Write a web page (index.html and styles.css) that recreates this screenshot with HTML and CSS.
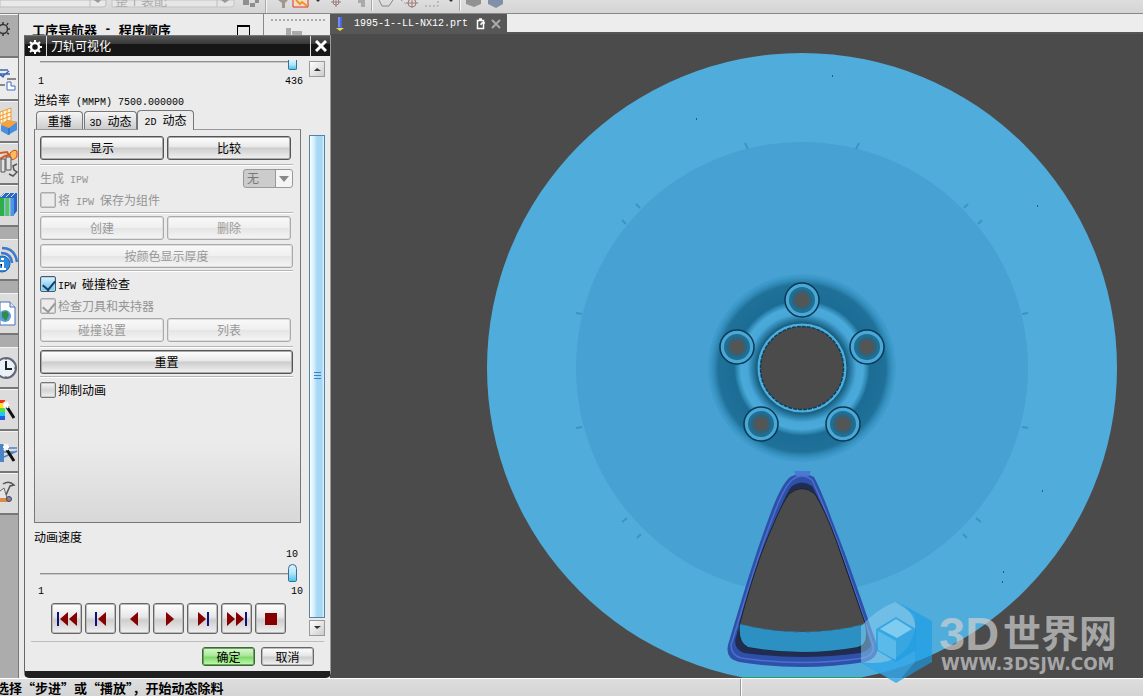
FILE: index.html
```html
<!DOCTYPE html>
<html lang="zh-CN">
<head>
    <meta charset="UTF-8" />
    <meta name="viewport" content="width=device-width, initial-scale=1.0">
    <title>刀轨可视化</title>
    <link rel="stylesheet" href="styles.css">
</head>
<body>

<div class="toolbar">
    <svg class="toolbar-icons" width="560" height="14" viewBox="0 0 560 14">
        <path d="M0 0h106v4q0 3-3 3H0z" fill="#e9e9e9" stroke="#bdbdbd"/>
        <path d="M90 0v7" stroke="#bdbdbd"/>
        <path d="M94 0h7l-3 3z" fill="#999"/>
        <path d="M112 0h122v4q0 3-3 3H112z" fill="#e6e6e6" stroke="#c4c4c4"/>
        <path d="M217 0v7" stroke="#bdbdbd"/>
        <path d="M221 0h8l-4 3z" fill="#999"/>
        <path d="M243 0h6v5h-6zM250 3h5v4h-5zM255 0h4v3h-4z" fill="#8e8e8e"/>
        <path d="M265.500 0v13M371.500 0v11M459.500 0v11" stroke="#aaa"/>
        <path d="M266.500 0v13M372.500 0v11M460.500 0v11" stroke="#f5f5f5"/>
        <path d="M278 0h10l-3 3v5h-3v-5z" fill="#a1978b"/>
        <path d="M293 0v7h15v-7" fill="#f3dcc9" stroke="#d33"/>
        <path d="M296 0l4 4 2-2 5 4" fill="none" stroke="#e89a22" stroke-width="2"/>
        <path d="M316 0h4l-2 2zM449 0h4l-2 2z" fill="#333"/>
        <g fill="none" stroke="#a07878"><circle cx="336" cy="2" r="3"/><path d="M331 2h10M336-3v10"/><circle cx="412" cy="3" r="4"/><path d="M406 3h12M412-3v11"/></g>
        <path d="M358 0h7v7h-4v-4h-3z" fill="#aaa"/>
        <path d="M379 0l3 6h7l4-6" fill="none" stroke="#888"/>
        <path d="M401 0l6 5M425 6h13v-6" fill="none" stroke="#999" stroke-dasharray="2 2"/>
        <path d="M466 0h15v4l-7 3-8-3z" fill="#929292"/>
        <path d="M488 0h15v4l-7 4-8-4z" fill="#8090a8"/>
    </svg>
    <span class="toolbar-combo">整个装配</span>
</div>

<div class="main">
    <div class="resource-bar">
        <button class="res-item res-gear" aria-label="设置">
            <svg width="18" height="24" viewBox="0 0 18 24"><g fill="none" stroke="#333" stroke-width="1.500"><circle cx="3" cy="8" r="4.500"/><path d="M3 1v2M3 13v2M8 8h2M7 4l1-2M7 12l2 1"/></g></svg>
        </button>
        <button class="res-item res-active" aria-label="装配导航器">
            <svg width="18" height="26" viewBox="0 0 18 26"><path d="M0 4h8M0 8h10M2 11L9 5M0 9l4 2" stroke="#3d65b7" stroke-width="1.500"/><path d="M7 13h9M0 19h5" stroke="#222"/><path d="M7 16h4v4h4v4H7z" fill="#fff" stroke="#446bc0"/></svg>
        </button>
        <button class="res-item" aria-label="部件导航器">
            <svg width="18" height="30" viewBox="0 0 18 30"><path d="M0 5l11-4v15H0z" fill="#fff4df" stroke="#ed9b2e"/><path d="M0 9l11-4M0 13l11-4M3 4v11M7 2v11" stroke="#ed9b2e"/><path d="M1 18l6-5 10 2v8l-9 5-7-4z" fill="#4a8fe0"/><path d="M1 18l8 3 8-6-10-2z" fill="#f9a13a"/><path d="M9 21v7" stroke="#245eaf"/></svg>
        </button>
        <button class="res-item" aria-label="加工导航器">
            <svg width="18" height="30" viewBox="0 0 18 30"><path d="M0 4l7-1 2 3-4 1-5 3" fill="none" stroke="#d85c22" stroke-width="2"/><path d="M10 4l4-3 3 1v6l-4 3-3-2z" fill="#ffb95b" stroke="#d24b18"/><path d="M1 10h4v13H1zM6 8h5v13H6z" fill="#e2e2e2" stroke="#555"/><path d="M17 15l-4 2 1 4 3 2-4 4-4-2" fill="none" stroke="#555" stroke-width="1.500"/></svg>
        </button>
        <button class="res-item" aria-label="重用库">
            <svg width="18" height="30" viewBox="0 0 18 30"><path d="M0 6l4-4h13v18l-4 5H0z" fill="#2867c8"/><path d="M0 7h5v18H0z" fill="#2eae4b"/><path d="M6 7h4v18H6z" fill="#53c36c"/><path d="M11 7h3v18h-3z" fill="#5293e8"/><path d="M1 6l4-4M6 6l4-4M11 6l4-4M5 7v18M10 7v18" stroke="#d8efe0"/></svg>
        </button>
        <span class="res-gap"></span>
        <button class="res-item" aria-label="网页浏览器">
            <svg width="18" height="30" viewBox="0 0 18 30"><g fill="none" stroke="#3d79cc" stroke-width="2.500"><path d="M2 3q13 0 15 14M1 8q10 0 11 10"/></g><circle cx="2" cy="19" r="8" fill="#2f8be0" stroke="#1f62ad"/><path d="M1 14h3M0 18h3v6M0 24h6" stroke="#fff" stroke-width="2"/></svg>
        </button>
        <span class="res-gap"></span>
        <button class="res-item" aria-label="历史网页">
            <svg width="18" height="30" viewBox="0 0 18 30"><path d="M0 3h10l5 5v18H0z" fill="#fff" stroke="#4a70b8"/><path d="M10 3v5h5" fill="#dbe8fa" stroke="#4a70b8"/><circle cx="5" cy="17" r="6" fill="#5a9edc"/><path d="M2 13l5-1 2 4-3 6-4-4z" fill="#328c49"/></svg>
        </button>
        <span class="res-gap"></span>
        <button class="res-item" aria-label="历史记录">
            <svg width="18" height="30" viewBox="0 0 18 30"><circle cx="6" cy="15" r="10" fill="#e9f1fa" stroke="#667" stroke-width="2"/><path d="M6 8v8h6" fill="none" stroke="#222" stroke-width="2"/><path d="M6 6v1M14 15h1M6 23v1M12 9l1-1M12 21l1 1" stroke="#456"/></svg>
        </button>
        <button class="res-item" aria-label="系统材料">
            <svg width="18" height="30" viewBox="0 0 18 30"><path d="M0 5h5v4H0z" fill="#f32e22"/><path d="M0 8h5v5H0z" fill="#ffe32b"/><path d="M0 13h5v4H0z" fill="#58dc42"/><path d="M0 17h5v4H0z" fill="#20c6ed"/><path d="M0 21h5v4H0z" fill="#245be5"/><path d="M7 12l7 11" stroke="#111" stroke-width="3"/><path d="M4 7l4 6M8 7l-4 6M3 10h6" stroke="#fff" stroke-width="2"/></svg>
        </button>
        <button class="res-item" aria-label="加工向导">
            <svg width="18" height="30" viewBox="0 0 18 30"><path d="M0 7h4v18H0z" fill="#4c83c4"/><path d="M4 11h13M4 15h11M4 20l13-6" stroke="#4c83c4" stroke-width="1.500"/><path d="M7 13l7 11" stroke="#111" stroke-width="3"/><path d="M4 7l4 6M8 7l-4 6M3 10h6" stroke="#fff" stroke-width="2"/></svg>
        </button>
        <button class="res-item" aria-label="角色">
            <svg width="18" height="30" viewBox="0 0 18 30"><path d="M3 5q6-4 11 1l-4 1-4 9" fill="#ddd" stroke="#555" stroke-width="1.500"/><path d="M0 12l4-3 3 10-4 3-3-1" fill="#e6e6e6" stroke="#666"/><path d="M0 19h7l3 4H0z" fill="#dc8b46"/><circle cx="9" cy="20" r="2.500" fill="#888" stroke="#447"/></svg>
        </button>
    </div>

    <div class="navigator">
        <div class="navigator-title">工序导航器<span class="latin"> - </span>程序顺序<span class="pin"></span></div>
        <div class="navigator-side"><svg width="66" height="22" viewBox="0 0 66 22"><path d="M7 6h54" stroke="#aaa" stroke-width="2" stroke-dasharray="2 2"/><path d="M22 14h5v8h-5zM28 17h10v5H28z" fill="#aaa"/></svg></div>
    </div>

    <div class="viewport">
        <div class="file-tabs">
            <div class="file-tab">
                <svg width="20" height="19" viewBox="0 0 20 19"><path d="M8 2h4v11H8z" fill="#4964e0"/><path d="M9 2v10" stroke="#a6b4ff"/><path d="M6 13h8l-4 3z" fill="#e9df43"/></svg>
                <span class="file-name">1995-1--LL-NX12.prt</span>
                <svg width="12" height="12" viewBox="0 0 12 12"><path d="M2.500 2.500h6v8h-6zM4 1h3" fill="none" stroke="#fff" stroke-width="1.500"/><path d="M6 7q0-3 4-2" fill="none" stroke="#fff" stroke-width="1.500"/></svg>
                <button class="file-close" aria-label="关闭文件"><svg width="10" height="10" viewBox="0 0 10 10"><path d="M1 1l8 8M9 1L1 9" stroke="#aaa" stroke-width="2"/></svg></button>
            </div>
        </div>

        <svg class="model" viewBox="330 34 813 644">
            <defs>
                <clipPath id="canvas"><path d="M330 34h813v644H330z"/></clipPath>
                <radialGradient id="hub" gradientUnits="userSpaceOnUse" cx="802" cy="368" r="94">
                    <stop offset="0.45" stop-color="#3d9bcb"/>
                    <stop offset="0.47" stop-color="#145673"/>
                    <stop offset="0.51" stop-color="#23759d"/>
                    <stop offset="0.58" stop-color="#49a7d8"/>
                    <stop offset="0.65" stop-color="#4aaada"/>
                    <stop offset="0.7" stop-color="#2a82ac"/>
                    <stop offset="0.72" stop-color="#1b6d95"/>
                    <stop offset="0.89" stop-color="#1f7199"/>
                    <stop offset="0.93" stop-color="#2f88b4"/>
                    <stop offset="0.97" stop-color="#3b98c8"/>
                    <stop offset="1" stop-color="#429dce"/>
                </radialGradient>
                <g id="bolt">
                    <circle r="17" fill="#4aa8d7" stroke="#0b3955" stroke-width="1.500"/>
                    <circle r="13" fill="#1f6f94"/>
                    <circle r="10" fill="#30627a"/>
                    <circle r="7" fill="#545656"/>
                </g>
            </defs>
            <g clip-path="url(#canvas)">
                <circle cx="802" cy="368" r="315" fill="#50addb"/>
                <circle cx="802" cy="368" r="226" fill="#47a2d3"/>
                <g stroke="#3c94c2" stroke-width="2">
                    <path d="M745 143l3 6M859 143l-3 6M636 204l4 4M622 220l4 4M968 204l-4 4M982 220l-4 4M576 313l6 1M1028 313l-6 1M576 428l6-1M1028 428l-6-1M622 522l5-4M637 538l4-4M981 522l-5-4M967 538l-4-4"/>
                </g>
                <path d="M832 76h1M696 119h1M1037 206h1M1042 491h1M1003 572h1M1002 582h1" stroke="#17445c" stroke-width="1.500"/>
                <circle cx="802" cy="368" r="94" fill="url(#hub)"/>
                <circle cx="802" cy="368" r="43" fill="#4b4b4b" stroke="#4faedb" stroke-width="3"/>
                <circle cx="802" cy="368" r="41.500" fill="none" stroke="#0e3e5a" stroke-width="1.500" stroke-dasharray="4 1"/>
                <use href="#bolt" x="802" y="300"/>
                <use href="#bolt" x="737" y="347"/>
                <use href="#bolt" x="867" y="347"/>
                <use href="#bolt" x="761" y="424"/>
                <use href="#bolt" x="843" y="424"/>
                <path d="M790 477Q802 470 814 477Q822 492 832 520C849 562 864 608 877 645Q880 658 865 662Q802 672 739 662Q725 659 728 645C739 609 752 562 771 512Q781 485 790 477z" fill="#2e50a8"/>
                <path d="M794 471h17l-2 5h-13z" fill="#4a79d5"/>
                <path d="M792 480Q802 472 812 480Q819 494 829 520C846 562 861 611 873 645Q875 655 863 658Q802 667 741 658Q731 655 731 645C742 611 755 562 774 514Q784 487 792 480z" fill="none" stroke="#4d6fd0" stroke-width="1.500"/>
                <path d="M792 486Q802 479 812 486Q818 496 828 520C845 560 861 611 871 645Q869 651 860 653Q802 661 744 653Q735 650 735 640C745 608 758 560 776 521Q786 492 792 486z" fill="#202d50"/>
                <path d="M789 494Q802 483 815 494Q826 512 836 540L865 623Q871 645 858 647Q802 657 748 647Q737 642 740 623C748 592 761 551 771 530Q782 503 789 494z" fill="#4b4b4b" stroke="#172433"/>
                <path d="M740 624Q802 640 865 624Q869 644 858 647Q802 657 748 647Q738 642 740 624z" fill="#2c90c2"/>
                <path d="M740 624Q802 640 865 624" fill="none" stroke="#236e91" stroke-dasharray="4 7"/>
                <path d="M742 677.500h120" stroke="#1fa34d"/>
            </g>
            <g class="watermark">
                <path d="M861 626Q877 609 895 602L915 615V662L897 683L861 662z" fill="#8fd0f0" opacity="0.500"/>
                <path d="M896 601L932 621V662L896 683L860 662Q905 669 915 630Q917 613 896 601z" fill="#1a9de8" opacity="0.650"/>
                <path d="M896 617L916 629V650L896 662L876 650V629z" fill="#219ce0" opacity="0.700"/>
                <path d="M896 619L912 629L897 638L880 629z" fill="#9fdcf6" opacity="0.700"/>
                <path d="M878 631L896 641V660L878 650z" fill="#69c2ed" opacity="0.700"/>
                <g fill="#d0d0d0" fill-opacity="0.700">
                    <text class="mark-latin" x="939" y="650">3D</text>
                    <text class="mark-cjk" x="1003" y="647">世界网</text>
                    <text class="mark-url" x="941" y="670">WWW.3DSJW.COM</text>
                </g>
            </g>
        </svg>
    </div>

    <div class="dialog">
        <div class="dialog-title">
            <svg width="21" height="20" viewBox="0 0 21 20"><circle cx="10" cy="11" r="4" fill="none" stroke="#fff" stroke-width="2.500"/><path d="M10 4v3M10 15v3M3 11h3M14 11h3M5 6l2 2M13 14l2 2M15 6l-2 2M7 14l-2 2" stroke="#fff" stroke-width="2"/></svg>
            <h2>刀轨可视化</h2>
            <button class="dialog-close" aria-label="关闭"><svg width="12" height="12" viewBox="0 0 12 12"><path d="M1 1l10 10M11 1L1 11" stroke="#fff" stroke-width="3"/></svg></button>
        </div>

        <div class="dialog-body">
            <div class="dialog-content">
                <input class="slider slider-top" type="range" min="1" max="436" value="436" aria-label="运动">
                <div class="range-labels latin"><span>1</span><span>436</span></div>
                <div class="feed-rate">进给率<span class="latin"> (MMPM) 7500.000000</span></div>

                <div class="tabs" role="tablist">
                    <button class="tab" role="tab">重播</button>
                    <button class="tab" role="tab"><span class="latin">3D </span>动态</button>
                    <button class="tab tab-active" role="tab"><span class="latin">2D </span>动态</button>
                </div>

                <div class="tab-panel">
                    <div class="btn-row">
                        <button class="btn">显示</button>
                        <button class="btn">比较</button>
                    </div>
                    <hr>
                    <div class="field disabled">
                        <label for="ipw">生成<span class="latin"> IPW</span></label>
                        <span class="select-box"><select id="ipw" disabled><option>无</option></select></span>
                    </div>
                    <label class="check disabled"><input type="checkbox" disabled><span>将<span class="latin"> IPW </span>保存为组件</span></label>
                    <hr>
                    <div class="btn-row">
                        <button class="btn" disabled>创建</button>
                        <button class="btn" disabled>删除</button>
                    </div>
                    <button class="btn" disabled>按颜色显示厚度</button>
                    <hr>
                    <label class="check"><input type="checkbox" checked><span><span class="latin">IPW </span>碰撞检查</span></label>
                    <label class="check disabled"><input type="checkbox" checked disabled><span>检查刀具和夹持器</span></label>
                    <div class="btn-row">
                        <button class="btn" disabled>碰撞设置</button>
                        <button class="btn" disabled>列表</button>
                    </div>
                    <hr>
                    <button class="btn">重置</button>
                    <hr>
                    <label class="check"><input type="checkbox"><span>抑制动画</span></label>
                </div>

                <label class="speed-label" for="speed">动画速度</label>
                <div class="speed-value latin">10</div>
                <input class="slider" id="speed" type="range" min="1" max="10" value="10">
                <div class="range-labels latin"><span>1</span><span>10</span></div>

                <div class="player">
                    <button class="play-btn" aria-label="倒回到开始"><svg width="24" height="16" viewBox="0 0 24 16"><path d="M2 1h2v14H2z" fill="#10107c"/><path d="M13 1v14L5 8zM22 1v14l-8-7z" fill="#860000"/></svg></button>
                    <button class="play-btn" aria-label="上一步"><svg width="24" height="16" viewBox="0 0 24 16"><path d="M6 1h2v14H6z" fill="#10107c"/><path d="M17 1v14L9 8z" fill="#860000"/></svg></button>
                    <button class="play-btn" aria-label="反向播放"><svg width="24" height="16" viewBox="0 0 24 16"><path d="M15 1v14L7 8z" fill="#860000"/></svg></button>
                    <button class="play-btn" aria-label="播放"><svg width="24" height="16" viewBox="0 0 24 16"><path d="M9 1v14l8-7z" fill="#860000"/></svg></button>
                    <button class="play-btn" aria-label="步进"><svg width="24" height="16" viewBox="0 0 24 16"><path d="M7 1v14l8-7z" fill="#860000"/><path d="M16 1h2v14h-2z" fill="#10107c"/></svg></button>
                    <button class="play-btn" aria-label="快进到结束"><svg width="24" height="16" viewBox="0 0 24 16"><path d="M2 1v14l8-7zM11 1v14l8-7z" fill="#860000"/><path d="M20 1h2v14h-2z" fill="#10107c"/></svg></button>
                    <button class="play-btn" aria-label="停止"><svg width="24" height="16" viewBox="0 0 24 16"><path d="M6 2h12v12H6z" fill="#860000"/></svg></button>
                </div>
            </div>

            <div class="scrollbar">
                <button class="scroll-arrow" aria-label="向上滚动"><svg width="7" height="4" viewBox="0 0 7 4"><path d="M0 4l3-3 4 3z" fill="#333"/></svg></button>
                <div class="scroll-thumb"></div>
                <button class="scroll-arrow" aria-label="向下滚动"><svg width="7" height="4" viewBox="0 0 7 4"><path d="M0 0l3 3 4-3z" fill="#333"/></svg></button>
            </div>
        </div>

        <div class="dialog-footer">
            <button class="footer-btn footer-ok">确定</button>
            <button class="footer-btn">取消</button>
        </div>
    </div>
</div>

<div class="statusbar">
    <span class="status-text">选择“步进”或“播放”，开始动态除料</span>
    <span class="status-right"></span>
</div>

</body>
</html>
```
FILE: styles.css
```css
* {
    box-sizing: border-box;
}

body {
    margin: 0;
    height: 100vh;
    display: flex;
    flex-direction: column;
    overflow: hidden;
    font-family: "Noto Sans CJK SC", sans-serif;
    font-size: 12px;
    line-height: 16px;
    color: #000;
    background: #d9d9d9;
}

button {
    font: inherit;
    color: inherit;
    padding: 0;
    border: none;
    background: none;
}

svg {
    display: block;
    flex: none;
}

.latin {
    font-family: "Liberation Mono", monospace;
    font-size: 10px;
    line-height: 10px;
    white-space: pre;
}

/* top toolbar */
.toolbar {
    flex: none;
    height: 14px;
    position: relative;
    overflow: hidden;
    background: linear-gradient(#dedede, #d4d4d4);
    border-bottom: 1px solid #888;
}

.toolbar-combo {
    position: absolute;
    left: 115px;
    top: -8px;
    font-size: 13px;
    color: #aaa;
}

.main {
    flex: 1;
    min-height: 0;
    display: flex;
    position: relative;
}

/* resource bar */
.resource-bar {
    width: 19px;
    flex: none;
    display: flex;
    flex-direction: column;
    background: #acacac;
    border-right: 1px solid #777;
}

.res-item {
    height: 42px;
    flex: none;
    display: flex;
    align-items: center;
    background: #dcdcdc;
    border-top: 1px solid #f4f4f4;
    border-bottom: 2px solid #777;
}

.res-gear {
    height: 44px;
    background: #acacac;
    align-items: flex-start;
    padding-top: 6px;
}

.res-active {
    height: 43px;
    background: #ececec;
}

.res-gap {
    height: 12px;
    flex: none;
}

/* navigator */
.navigator {
    width: 311px;
    flex: none;
    display: flex;
    align-items: flex-start;
    background: #ebebeb;
}

.navigator-title {
    width: 246px;
    height: 24px;
    padding: 6px 13px 0;
    font-size: 13px;
    font-weight: bold;
    line-height: 20px;
    display: flex;
    border-right: 1px solid #888;
}

.navigator-title .latin {
    font-size: 12px;
    line-height: 20px;
}

.pin {
    width: 13px;
    height: 13px;
    margin: 5px 0 0 auto;
    border: 1px solid #000;
    border-top-width: 2px;
}

/* graphics window */
.viewport {
    flex: 1;
    min-width: 0;
    display: flex;
    flex-direction: column;
    background: #4b4b4b;
}

.file-tabs {
    height: 20px;
    flex: none;
    display: flex;
    background: #ededed;
    border-bottom: 2px solid #555;
}

.file-tab {
    width: 177px;
    height: 20px;
    display: flex;
    align-items: center;
    background: #575757;
}

.file-name {
    flex: 1;
    padding-left: 4px;
    font-family: "Liberation Mono", monospace;
    font-size: 10px;
    color: #fff;
}

.file-close {
    margin: 0 6px 0 4px;
}

.model {
    flex: 1;
    width: 100%;
    min-height: 0;
    overflow: visible;
    position: relative;
    z-index: 1;
}

.mark-latin {
    font: bold 47px "Liberation Sans", sans-serif;
}

.mark-cjk {
    font: bold 38px "Noto Sans CJK SC", sans-serif;
}

.mark-url {
    font: bold 17px "DejaVu Sans", sans-serif;
}

/* dialog window */
.dialog {
    position: absolute;
    left: 24px;
    top: 21px;
    z-index: 2;
    width: 307px;
    background: #ebebeb;
    border-left: 1px solid #666;
    border-right: 1px solid #999;
    border-bottom: 7px solid #202020;
    border-radius: 0 0 5px 5px;
}

.dialog-title {
    height: 21px;
    display: flex;
    align-items: center;
    background: linear-gradient(#555, #383838 40%, #161616 42%, #161616);
    border-top: 1px solid #777;
    color: #fff;
}

.dialog-title h2 {
    flex: 1;
    margin: 0;
    padding-left: 4px;
    border-left: 1px solid #ddd;
    font-size: 12px;
    font-weight: normal;
    line-height: 20px;
}

.dialog-close {
    width: 20px;
    height: 20px;
    display: flex;
    align-items: center;
    justify-content: center;
    border-left: 1px solid #ddd;
}

.dialog-body {
    display: flex;
    padding: 0 5px 2px 9px;
}

.dialog-content {
    flex: 1;
    display: flex;
    flex-direction: column;
}

.scrollbar {
    width: 16px;
    margin: 5px 0 0;
    display: flex;
    flex-direction: column;
}

.scroll-arrow {
    height: 16px;
    display: flex;
    align-items: center;
    justify-content: center;
    background: linear-gradient(135deg, #fff, #ccc);
    border: 1px solid #999;
}

.scroll-thumb {
    flex: 1;
    margin: 58px 0 2px;
    border: 1px solid #5284a4;
    background: repeating-linear-gradient(#3e83b8 0 1px, transparent 1px 3px) center / 7px 9px no-repeat,
        linear-gradient(90deg, #fff, #c7e9fc 35%, #a5d8f5 50%, #a5d8f5 85%, #e4f5fd);
}

/* sliders */
.slider {
    -webkit-appearance: none;
    appearance: none;
    width: 257px;
    height: 20px;
    margin: 0 0 0 6px;
    background: linear-gradient(#929292, #929292) 0 10px / 100% 1px no-repeat,
        linear-gradient(#c9c9c9, #c9c9c9) 0 11px / 100% 1px no-repeat;
}

.slider::-webkit-slider-thumb {
    -webkit-appearance: none;
    width: 9px;
    height: 18px;
    border: 1px solid #386f94;
    border-radius: 5px 5px 2px 2px;
    background: linear-gradient(#d9f3fd, #b5e5fa 50%, #48c6ee);
}

.slider-top {
    height: 17px;
    background-position: 0 5px, 0 6px;
}

.slider-top::-webkit-slider-thumb {
    height: 10px;
    border-top: none;
    border-radius: 0 0 2px 2px;
}

.range-labels {
    display: flex;
    justify-content: space-between;
    width: 269px;
    padding-left: 4px;
    line-height: 18px;
}

.feed-rate {
    height: 17px;
    line-height: 17px;
}

/* tabs */
.tabs {
    display: flex;
    align-items: flex-end;
    height: 21px;
    padding-left: 2px;
}

.tab {
    height: 18px;
    width: 47px;
    margin-right: 1px;
    background: linear-gradient(#f6f6f6, #ccc);
    border: 1px solid #777;
    border-bottom: none;
    border-radius: 4px 4px 0 0;
    line-height: 16px;
}

.tab + .tab {
    width: 53px;
    margin-right: 0;
}

.tabs .tab-active {
    width: 57px;
    height: 20px;
    margin-bottom: -1px;
    padding-bottom: 2px;
    background: #ebebeb;
    position: relative;
}

.tab-panel {
    width: 267px;
    min-height: 394px;
    padding: 6px 7px 0 5px;
    display: flex;
    flex-direction: column;
    gap: 2px;
    background: linear-gradient(#ebebeb 80%, #d8d8d8);
    border: 1px solid #777;
    border-top-color: #999;
}

hr {
    width: 100%;
    height: 2px;
    margin: 0;
    border: none;
    border-top: 1px solid #b6b6b6;
    background: #fff;
}

.btn-row {
    display: flex;
    gap: 3px;
    margin-bottom: 2px;
    padding-right: 2px;
}

.btn-row .btn {
    flex: 1;
}

.btn {
    height: 24px;
    border: 1px solid #555;
    border-radius: 3px;
    box-shadow: inset 0 0 0 1px #aaa;
    background: linear-gradient(#fff, #e8e8e8 45%, #cdcdcd 50%, #f2f2f2);
    line-height: 20px;
}

.btn:disabled {
    border-color: #aaa;
    box-shadow: inset 0 0 0 1px #ddd;
    background: linear-gradient(#f9f9f9, #efefef 50%, #e5e5e5 52%, #f5f5f5);
    color: #999;
}

.field {
    height: 20px;
    display: flex;
    justify-content: space-between;
    align-items: center;
}

.disabled {
    color: #949494;
}

.select-box {
    position: relative;
}

.select-box::after {
    content: "";
    position: absolute;
    right: 4px;
    top: 7px;
    border: 5px solid transparent;
    border-top: 6px solid #888;
    border-bottom: none;
}

select {
    -webkit-appearance: none;
    appearance: none;
    display: block;
    width: 50px;
    height: 19px;
    padding: 0 0 0 3px;
    border: 1px solid #999;
    border-radius: 3px;
    background: linear-gradient(90deg, #ccc 31px, #999 31px, #999 32px, #f5f5f5 32px);
    font: inherit;
    font-size: 12px;
    line-height: 16px;
}

select:disabled {
    color: #777;
    opacity: 1;
}

.check {
    height: 20px;
    display: flex;
    align-items: center;
    gap: 2px;
}

.check input {
    -webkit-appearance: none;
    appearance: none;
    width: 16px;
    height: 16px;
    margin: 0;
    border: 1px solid #777;
    border-radius: 2px;
    box-shadow: inset 0 0 0 1px #ccc;
    background: linear-gradient(#f6f6f6, #d4d4d4 50%, #f0f0f0);
    position: relative;
}

.check input:disabled {
    border-color: #aaa;
    background: #ececec;
}

.check input:checked::after {
    content: "";
    position: absolute;
    left: 4px;
    top: 1px;
    width: 6px;
    height: 10px;
    border: solid #173c66;
    border-width: 0 2px 2px 0;
    transform: rotate(40deg);
}

.check input:checked:enabled {
    border-color: #27638d;
    background: linear-gradient(#e2f5fd, #9bd8f3 50%, #6bc7ee);
}

.check input:checked:disabled::after {
    border-color: #999;
}

.speed-label {
    margin-top: 4px;
    line-height: 20px;
}

.speed-value {
    padding-right: 11px;
    text-align: right;
    line-height: 16px;
}

/* playback buttons */
.player {
    display: flex;
    gap: 3px;
    padding: 2px 0 2px 17px;
}

.play-btn {
    width: 31px;
    height: 31px;
    display: flex;
    align-items: center;
    justify-content: center;
    border: 1px solid #666;
    border-radius: 3px;
    box-shadow: inset 0 0 0 1px #bbb;
    background: linear-gradient(#fff, #e6e6e6 45%, #cecece 55%, #f0f0f0);
}

.dialog-footer {
    margin: 3px 6px 0;
    padding: 5px 10px 5px;
    display: flex;
    justify-content: flex-end;
    gap: 6px;
    border-top: 1px solid #bbb;
}

.footer-btn {
    width: 53px;
    height: 19px;
    border: 1px solid #666;
    border-radius: 3px;
    box-shadow: inset 0 0 0 1px #bbb;
    background: linear-gradient(#fff, #e6e6e6 45%, #cecece 55%, #f4f4f4);
}

.footer-ok {
    border-color: #376b32;
    box-shadow: inset 0 0 0 1px #6da067;
    background: linear-gradient(#def8d3, #a9e897 45%, #82d76e 55%, #c2ffac);
}

/* status bar */
.statusbar {
    flex: none;
    height: 18px;
    display: flex;
    border-top: 1px solid #fff;
    background: linear-gradient(#dedede, #d4d4d4);
}

.status-text {
    width: 741px;
    text-indent: -4px;
    font-size: 13px;
    font-weight: bold;
    line-height: 18px;
    white-space: nowrap;
    border-right: 1px solid #999;
}

.status-right {
    flex: 1;
    border-left: 1px solid #fff;
}
```
